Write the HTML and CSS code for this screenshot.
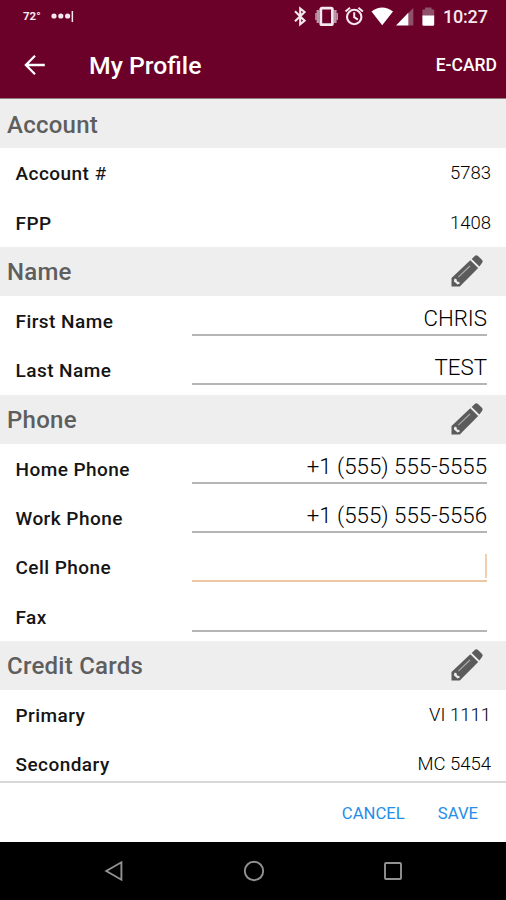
FILE: index.html
```html
<!DOCTYPE html>
<html lang="en">
<head>
<meta charset="utf-8">
<title>My Profile</title>
<link rel="stylesheet" href="styles.css">
</head>
<body>
<svg class="defs" width="0" height="0" aria-hidden="true">
  <symbol id="pencil" viewBox="0 0 34 34">
    <path fill="#5b5b5b" d="M1.5 32.5V24L20.3 6.2 28.2 14.1 9.8 32.5Z"/>
    <path fill="#5b5b5b" d="M21.7 4.9 25 1.8Q26.5.6 28 2L32.1 6.1Q33.4 7.6 32 9.1L29.4 12.4Z"/>
    <path fill="#eee" d="M4.6 24.6 6.6 25.2 7 27.5 9.3 27.9 9.8 29.5 7.5 30.4 3.8 27.2Z"/>
    <path stroke="#aaa" stroke-width="1.2" d="M8.3 23.1 20 12"/>
  </symbol>
</svg>
<div class="screen">
  <header class="top">
    <div class="status">
      <span class="temp">72°</span>
      <svg class="dots" width="24" height="14" viewBox="0 0 24 14" fill="#f5e8ed"><circle cx="3" cy="7" r="2.6"/><circle cx="9.8" cy="7" r="2.6"/><circle cx="16.6" cy="7" r="2.6"/><path d="M20.6 2h1.5v11h-1.5z"/></svg>
      <svg class="icons" width="146" height="22" viewBox="292 4 146 22" fill="none" stroke="#f5e8ed">
        <path stroke-width="2.1" d="M295 10.3 304.6 19.8 300.2 23.4V7.4L304.6 11 295 20.3"/>
        <rect x="320.8" y="7.2" width="11.6" height="16.4" rx="1.2" stroke-width="2.8"/>
        <path stroke="#b997a6" stroke-width="2.6" d="M317.9 9v13M335.3 9v13"/>
        <path stroke="#b997a6" stroke-width="1.6" d="M316 12v7M337.2 12v7"/>
        <circle cx="354.2" cy="16" r="7.2" stroke-width="2.1"/>
        <path stroke-width="2" d="M345.5 10.4 350 6.7M358.4 6.7 362.9 10.4M354.2 11.2V16.2L357.9 18.7"/>
        <path fill="#fff" stroke="none" d="M371.5 10.6Q382.2 2.2 393 10.6L382.2 24.2Z"/>
        <path fill="#8f5069" stroke="none" d="M408 12.2 413.3 7V24.6H408Z"/>
        <path fill="#fff" stroke="none" d="M396 24.6 408.3 11.7V24.6Z"/>
        <path fill="#8f5069" stroke="none" d="M425 6.6h6.6v2h2.6v8h-11.8v-8H425Z"/>
        <path fill="#fff" stroke="none" d="M422.4 14.4h11.8v9.2q0 1.2-1.2 1.2h-9.4q-1.2 0-1.2-1.2Z"/>
      </svg>
      <span class="clock">10:27</span>
    </div>
    <div class="toolbar">
      <svg class="back" width="22" height="22" viewBox="0 0 22 22" fill="none" stroke="#fff" stroke-width="2.3"><path d="M2.2 11H20.8M11 1.8 1.9 11 11 20.2"/></svg>
      <h1 class="title">My Profile</h1>
      <span class="ecard">E-CARD</span>
    </div>
  </header>
  <main class="content">
    <h2 class="section"><span>Account</span></h2>
    <div class="row"><span class="label">Account <span class="hash">#</span></span><span class="value">5783</span></div>
    <div class="row"><span class="label">FPP</span><span class="value">1408</span></div>
    <h2 class="section"><span>Name</span><svg class="edit"><use href="#pencil"/></svg></h2>
    <div class="row"><span class="label">First Name</span><span class="field">CHRIS</span></div>
    <div class="row"><span class="label">Last Name</span><span class="field">TEST</span></div>
    <h2 class="section"><span>Phone</span><svg class="edit"><use href="#pencil"/></svg></h2>
    <div class="row"><span class="label">Home Phone</span><span class="field">+1 (555) 555-5555</span></div>
    <div class="row"><span class="label">Work Phone</span><span class="field">+1 (555) 555-5556</span></div>
    <div class="row"><span class="label">Cell Phone</span><span class="field active"><i class="caret"></i></span></div>
    <div class="row"><span class="label">Fax</span><span class="field"></span></div>
    <h2 class="section"><span>Credit Cards</span><svg class="edit"><use href="#pencil"/></svg></h2>
    <div class="row"><span class="label">Primary</span><span class="value">VI 1111</span></div>
    <div class="row"><span class="label">Secondary</span><span class="value">MC 5454</span></div>
  </main>
  <footer class="actions"><span>CANCEL</span><span>SAVE</span></footer>
  <nav class="nav">
    <svg width="20" height="22" viewBox="0 0 20 22"><path d="M17.4 2.3V19.7L2.3 11Z"/></svg>
    <svg width="22" height="22" viewBox="0 0 22 22"><circle cx="11" cy="11" r="9.2"/></svg>
    <svg width="20" height="20" viewBox="0 0 20 20"><rect x="2" y="2" width="16" height="16" rx="1"/></svg>
  </nav>
</div>
</body>
</html>
```
FILE: styles.css
```css
* { box-sizing: border-box; }
body { margin: 0; font-family: Roboto, "Liberation Sans", sans-serif; background: #fff; }
.defs { display: block; }
.screen { width: 506px; height: 900px; display: flex; flex-direction: column; overflow: hidden; }
.top { height: 99px; flex: none; background: #6b0028; color: #fff; border-bottom: 1px solid #927b78; }
.status { height: 32px; display: flex; align-items: center; padding-left: 23px; }
.temp { width: 28px; font-size: 11.5px; font-weight: 700; color: #f5e8ed; }
.dots { margin-right: 217px; }
.icons { margin-right: 5px; }
.clock { font-size: 18px; font-weight: 500; letter-spacing: -0.2px; color: #f5e8ed; }
.toolbar { height: 66px; display: flex; align-items: center; padding: 0 9px 0 24px; }
.back { margin-right: 43px; }
.title { margin: 2px 0 0; font-size: 24.8px; font-weight: 500; line-height: 30px; }
.ecard { margin-left: auto; font-size: 17.5px; font-weight: 500; }
.content { height: 682px; flex: none; overflow: hidden; }
.section { height: 49.25px; margin: 0; padding: 2px 22px 0 7px; display: flex; align-items: center; justify-content: space-between; background: #eee; color: #5e5e5e; font-size: 24px; font-weight: 500; line-height: 30px; letter-spacing: 0.25px; }
.edit { width: 34px; height: 34px; margin-top: -2px; }
.row { height: 49.25px; display: flex; align-items: center; justify-content: space-between; padding: 2px 15px 0 15.5px; }
.label { font-size: 19px; font-weight: 500; color: #151515; letter-spacing: 0.45px; }
.hash { font-weight: 400; }
.value { margin-top: -1px; font-size: 18.5px; font-weight: 300; color: #000; }
.field { width: 295px; height: 40px; margin: -2px 4px 0 0; align-self: flex-start; border-bottom: 2px solid #b5b5b5; color: #000; font-size: 22.3px; font-weight: 300; line-height: 45px; text-align: right; white-space: nowrap; }
.active { border-color: #edc6a6; display: flex; justify-content: flex-end; }
.caret { width: 2px; height: 24px; margin-top: 12px; background: #efceb2; }
.actions { height: 61px; flex: none; display: flex; align-items: center; justify-content: flex-end; gap: 33px; padding: 1px 28px 0 0; border-top: 2px solid #d8d8d8; color: #268eea; font-size: 16.7px; }
.nav { flex: 1; display: flex; align-items: center; justify-content: space-between; padding: 0 103px 0 104px; background: #000; fill: none; stroke: #929292; stroke-width: 1.9; }
```
